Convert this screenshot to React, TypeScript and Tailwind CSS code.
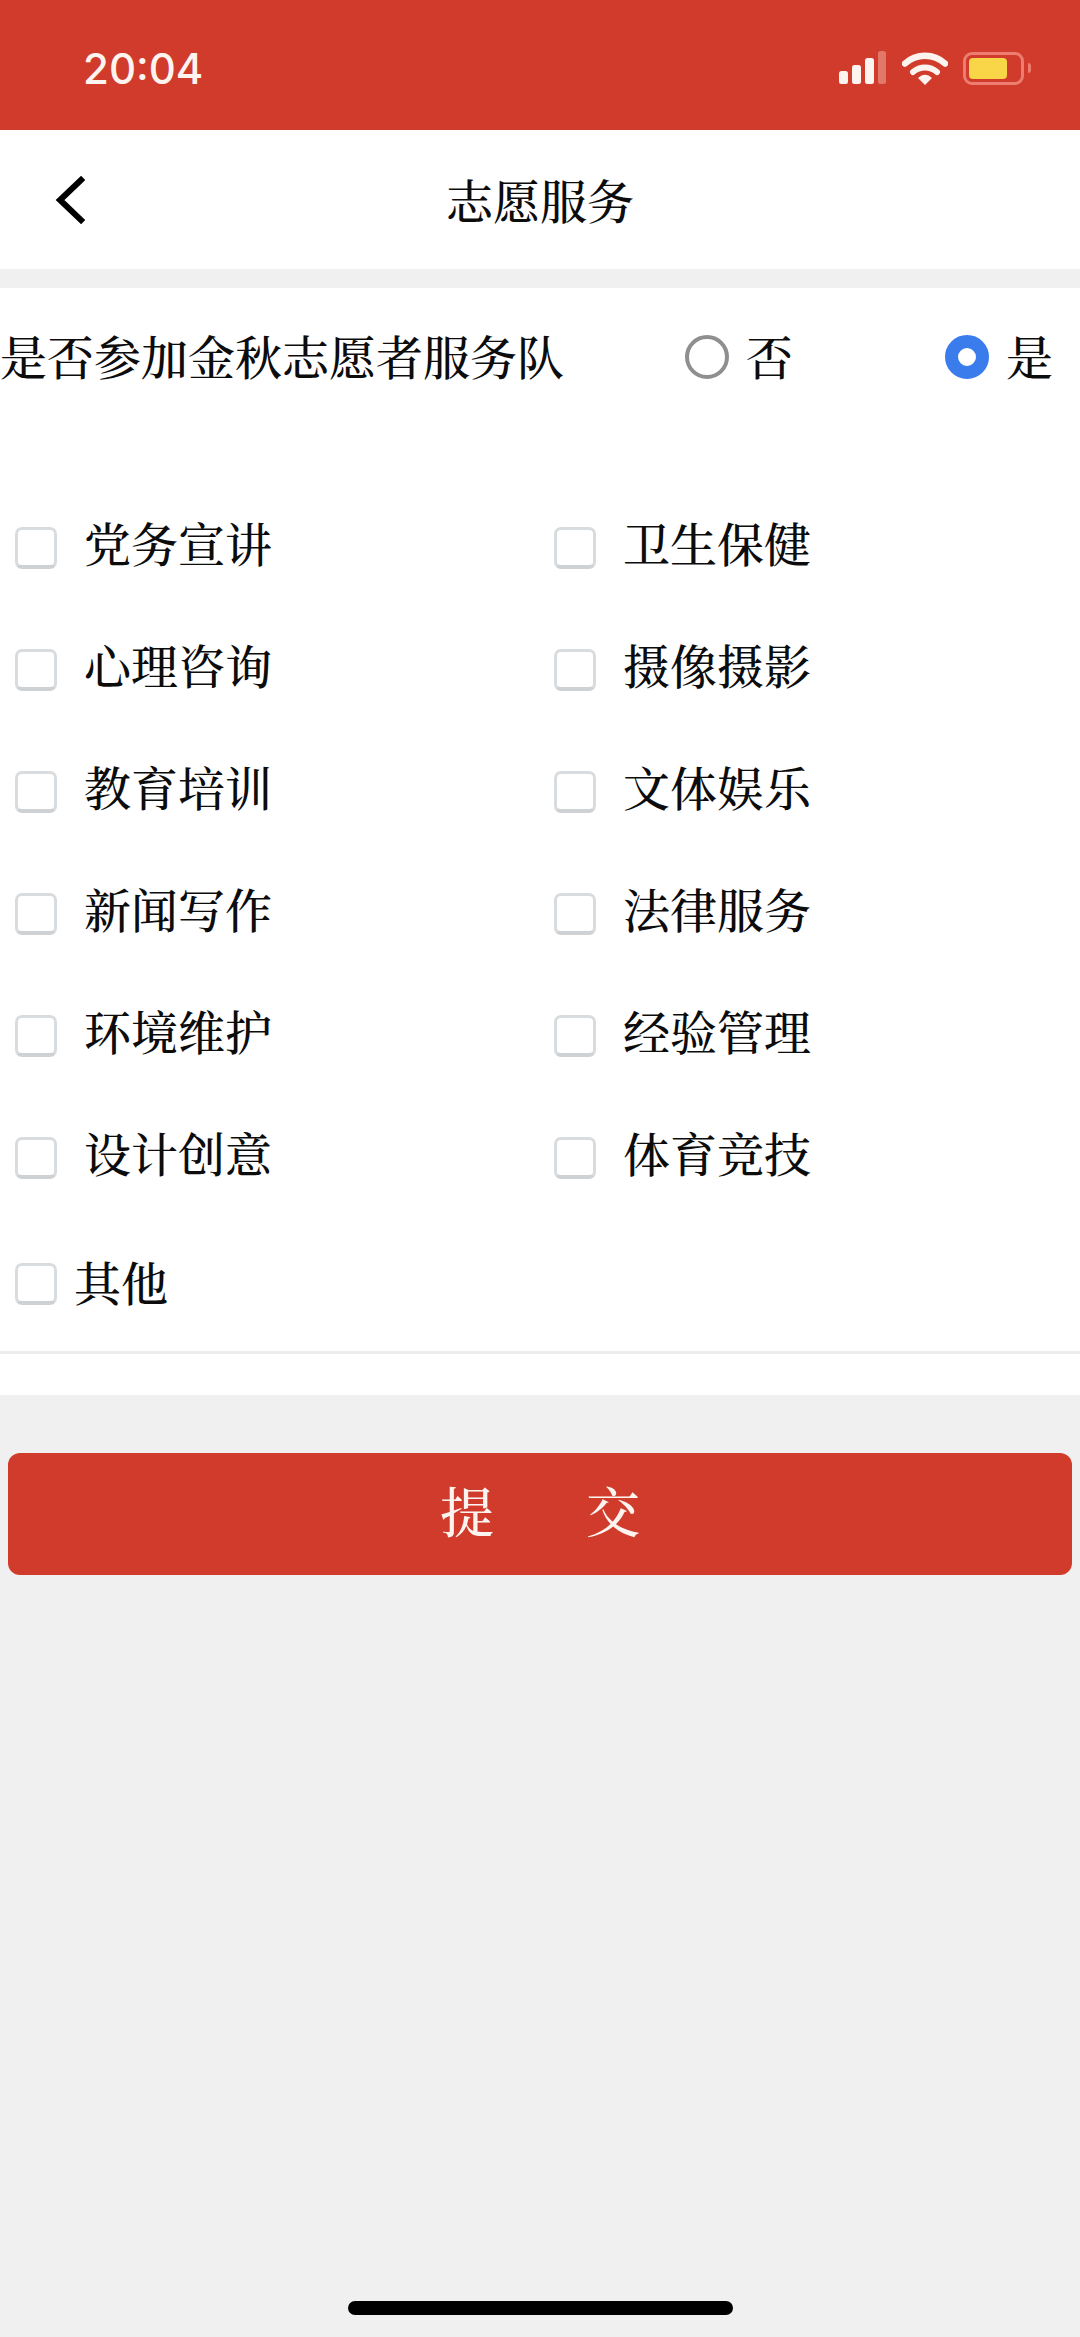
const serif = "font-['Noto_Serif_CJK_SC','Source_Han_Serif_SC','Songti_SC','Liberation_Serif','Noto_Sans_CJK_SC',serif]";

function Box() {
  return <span className="h-[42px] w-[42px] shrink-0 rounded-[7px] border-[3px] border-[#d9dcde] border-b-[4px] border-b-[#cfd2d5] bg-white" />;
}

function Check({ label }: { label: string }) {
  return (
    <div className="flex h-[122px] items-center">
      <Box />
      <span className="ml-[27px] text-[47px] font-medium leading-[60px] text-[#0c0c0c] -translate-y-[6px]">{label}</span>
    </div>
  );
}

const items = [
  "党务宣讲", "卫生保健", "心理咨询", "摄像摄影", "教育培训", "文体娱乐",
  "新闻写作", "法律服务", "环境维护", "经验管理", "设计创意", "体育竞技",
];

export default function App() {
  return (
    <div className={`flex min-h-[2337px] w-[1080px] flex-col bg-[#f0f0f0] ${serif}`}>
      <div className="flex h-[130px] items-center justify-between bg-[#d03b2b] pl-[83px] pr-[49px]">
        <span className="font-['Inter','Roboto',sans-serif] text-[42px] font-medium leading-none text-[#fdf3ef] translate-y-[4px]">20:04</span>
        <div className="flex items-center gap-[15px] translate-y-[3px]">
          <svg width="48" height="34" viewBox="0 0 48 34">
            <rect x="0" y="20" width="9" height="13" rx="2.5" fill="#fdf3ef" />
            <rect x="13" y="14" width="9" height="19" rx="2.5" fill="#fdf3ef" />
            <rect x="26" y="7" width="9" height="26" rx="2.5" fill="#fdf3ef" />
            <rect x="39" y="0" width="8" height="33" rx="2.5" fill="#e2786a" />
          </svg>
          <svg width="46" height="34" viewBox="0 0 46 34" fill="none">
            <path d="M3 12.5C14 2 32 2 43 12.5" stroke="#fdf3ef" strokeWidth="6.5" strokeLinecap="round" />
            <path d="M11 21C18 15 28 15 35 21" stroke="#fdf3ef" strokeWidth="6" strokeLinecap="round" />
            <path d="M16 27C20.5 22.5 25.5 22.5 30 27L23 34Z" fill="#fdf3ef" />
          </svg>
          <div className="flex items-center gap-[4px]">
            <div className="flex h-[33px] w-[61px] items-center rounded-[9px] border-[3px] border-[#ec7d70] p-[3px]">
              <div className="h-full w-[38px] rounded-[4px] bg-[#f8d648]" />
            </div>
            <span className="h-[10px] w-[3px] rounded-r-full bg-[#ec7d70]" />
          </div>
        </div>
      </div>

      <div className="relative flex h-[139px] items-center justify-center bg-white">
        <svg className="absolute left-[54px] top-[46px]" width="32" height="48" viewBox="0 0 32 48" fill="none">
          <path d="M27 4L6 24L27 44" stroke="#000" strokeWidth="6" strokeLinecap="square" />
        </svg>
        <span className="text-[47px] font-medium leading-none text-[#0c0c0c] -translate-y-[1px]">志愿服务</span>
      </div>

      <div className="mt-[19px] flex h-[1107px] flex-col bg-white">
        <div className="flex h-[138px] items-center text-[47px] font-medium leading-none text-[#0c0c0c]">
          <span className="w-[685px] -translate-y-[3px]">是否参加金秋志愿者服务队</span>
          <span className="h-[44px] w-[44px] rounded-full border-[4px] border-[#8f8f8f]" />
          <span className="ml-[17px] w-[199px] -translate-y-[3px]">否</span>
          <span className="h-[44px] w-[44px] rounded-full border-[13px] border-[#3a7ceb] bg-white" />
          <span className="ml-[17px] -translate-y-[3px]">是</span>
        </div>
        <div className="mt-[61px] grid grid-cols-[539px_1fr] pl-[15px]">
          {items.map((t) => (
            <Check key={t} label={t} />
          ))}
        </div>
        <div className="mt-[3px] flex h-[124px] items-center pl-[15px]">
          <Box />
          <span className="ml-[17px] text-[47px] font-medium leading-[60px] text-[#0c0c0c] -translate-y-[3px]">其他</span>
        </div>
        <div className="mt-[5px] h-[3px] bg-[#ececec]" />
      </div>

      <button className="mx-[8px] mt-[58px] flex h-[122px] items-center justify-center gap-[92px] rounded-[12px] bg-[#d03b2b] text-[54px] font-medium leading-none text-[#fdf3ef]">
        <span className="-translate-y-[4px]">提</span>
        <span className="-translate-y-[4px]">交</span>
      </button>

      <div className="mt-auto flex h-[36px] justify-center">
        <div className="h-[14px] w-[385px] rounded-full bg-black" />
      </div>
    </div>
  );
}
